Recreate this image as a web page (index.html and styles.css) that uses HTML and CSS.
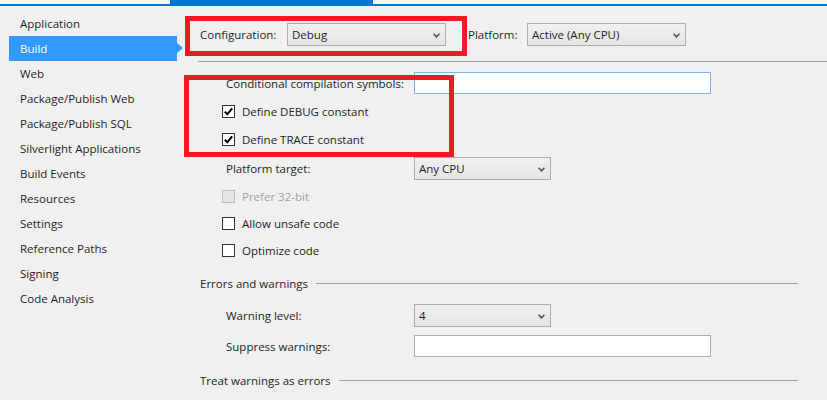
FILE: index.html
```html
<!DOCTYPE html>
<html lang="en">
  <head>
    <meta charset="UTF-8" />
    <meta name="viewport" content="width=device-width, initial-scale=1.0" />
    <title>Project Properties - Build</title>

    <link rel="stylesheet" href="styles.css">
  </head>
  <body>
    <div class="tabstrip">
      <div class="tab-active"></div>
    </div>

    <div class="main">
      <ul class="sidebar">
        <li>Application</li>
        <li class="selected">Build</li>
        <li>Web</li>
        <li>Package/Publish Web</li>
        <li>Package/Publish SQL</li>
        <li>Silverlight Applications</li>
        <li>Build Events</li>
        <li>Resources</li>
        <li>Settings</li>
        <li>Reference Paths</li>
        <li>Signing</li>
        <li>Code Analysis</li>
      </ul>

      <div class="content">
        <div class="config-row">
          <span class="config-label">Configuration:</span>
          <div class="dropdown config-drop">
            <span>Debug</span>
            <svg class="chevron" width="7" height="5" viewBox="0 0 7 5"><path d="M0.6 0.8 L3.5 3.9 L6.4 0.8" fill="none" stroke="#555" stroke-width="1.6" /></svg>
          </div>
          <span class="platform-label">Platform:</span>
          <div class="dropdown config-drop">
            <span>Active (Any CPU)</span>
            <svg class="chevron" width="7" height="5" viewBox="0 0 7 5"><path d="M0.6 0.8 L3.5 3.9 L6.4 0.8" fill="none" stroke="#555" stroke-width="1.6" /></svg>
          </div>
        </div>

        <div class="separator"></div>

        <div class="general">
          <div class="field symbols">
            <span class="field-label">Conditional compilation symbols:</span>
            <div class="textbox focused"></div>
          </div>
          <div class="check-row tall first">
            <span class="checkbox"><svg width="11" height="11" viewBox="0 0 11 11"><path d="M1.8 5.6 L4.3 8.2 L9.2 2.4" fill="none" stroke="#000" stroke-width="2" /></svg></span>
            Define DEBUG constant
          </div>
          <div class="check-row tall">
            <span class="checkbox"><svg width="11" height="11" viewBox="0 0 11 11"><path d="M1.8 5.6 L4.3 8.2 L9.2 2.4" fill="none" stroke="#000" stroke-width="2" /></svg></span>
            Define TRACE constant
          </div>
          <div class="field target">
            <span class="field-label">Platform target:</span>
            <div class="dropdown small-drop">
              <span>Any CPU</span>
              <svg class="chevron" width="7" height="5" viewBox="0 0 7 5"><path d="M0.6 0.8 L3.5 3.9 L6.4 0.8" fill="none" stroke="#555" stroke-width="1.6" /></svg>
            </div>
          </div>
          <div class="check-row disabled">
            <span class="checkbox"></span>
            Prefer 32-bit
          </div>
          <div class="check-row">
            <span class="checkbox"></span>
            Allow unsafe code
          </div>
          <div class="check-row">
            <span class="checkbox"></span>
            Optimize code
          </div>
        </div>

        <div class="group-title errors">Errors and warnings</div>
        <div class="general">
          <div class="field level">
            <span class="field-label">Warning level:</span>
            <div class="dropdown small-drop">
              <span>4</span>
              <svg class="chevron" width="7" height="5" viewBox="0 0 7 5"><path d="M0.6 0.8 L3.5 3.9 L6.4 0.8" fill="none" stroke="#555" stroke-width="1.6" /></svg>
            </div>
          </div>
          <div class="field suppress">
            <span class="field-label">Suppress warnings:</span>
            <div class="textbox"></div>
          </div>
        </div>

        <div class="group-title treat">Treat warnings as errors</div>
      </div>
    </div>

    <!-- annotation boxes drawn over the screenshot -->
    <div class="highlight box-config"></div>
    <div class="highlight box-defines"></div>
  </body>
</html>
```

FILE: styles.css
```css
body {
  margin: 0;
  height: 400px;
  overflow: hidden;
  background-color: #f0f0f0;
  color: #1e1e1e;
  font-family: "Open Sans", "Noto Sans", sans-serif;
  font-size: 11.5px;
}

.tabstrip {
  height: 4px;
  border-bottom: 2px solid #007acc;
  background-color: #f5f5f5;
}

.tab-active {
  margin-left: 170px;
  width: 203px;
  height: 4px;
  background-color: #007acc;
}

.main {
  display: flex;
}

/* left navigation */
.sidebar {
  list-style: none;
  margin: 0;
  padding: 5px 0 0 9px;
  width: 174px;
  flex-shrink: 0;
}

.sidebar li {
  position: relative;
  width: 168px;
  height: 25px;
  line-height: 25px;
  padding-left: 11px;
  box-sizing: border-box;
  white-space: nowrap;
}

.sidebar li.selected {
  background-color: #3399ff;
  color: #ffffff;
}

.sidebar li.selected::after {
  content: "";
  position: absolute;
  right: -6px;
  top: 7px;
  border-top: 5px solid transparent;
  border-bottom: 5px solid transparent;
  border-left: 6px solid #3399ff;
}

/* page */
.content {
  flex: 1;
  padding: 17px 0 0 17px;
}

.config-row {
  display: flex;
  align-items: center;
  height: 23px;
}

.config-label {
  width: 87px;
}

.platform-label {
  margin-left: 22px;
  width: 59px;
}

.dropdown {
  display: flex;
  align-items: center;
  justify-content: space-between;
  height: 23px;
  box-sizing: border-box;
  padding: 0 5px 0 4px;
  border: 1px solid #acacac;
  background: linear-gradient(#f0f0f0, #e5e5e5);
}

.config-drop {
  width: 159px;
}

.small-drop {
  width: 137px;
}

.chevron {
  margin-top: 1px;
}

.separator {
  margin: 15px 0 0 -2px;
  height: 1px;
  background-color: #a0a0a0;
}

.general {
  padding-left: 26px;
}

.field {
  display: flex;
  align-items: center;
}

.field-label {
  width: 188px;
  flex-shrink: 0;
}

.textbox {
  width: 297px;
  height: 22px;
  box-sizing: border-box;
  border: 1px solid #abadb3;
  background-color: #ffffff;
}

.textbox.focused {
  border-color: #7eb4ea;
}

.symbols {
  margin-top: 10px;
}

.target {
  margin-top: 4px;
}

.check-row {
  display: flex;
  align-items: center;
  height: 27px;
  margin-left: -4px;
}

.check-row.tall {
  height: 28px;
}

.check-row.first,
.check-row.disabled {
  margin-top: 3px;
}

.checkbox {
  display: flex;
  align-items: center;
  justify-content: center;
  width: 13px;
  height: 13px;
  box-sizing: border-box;
  margin-right: 7px;
  border: 1px solid #333333;
  background-color: #ffffff;
}

.check-row.disabled {
  color: #a2a2a2;
}

.check-row.disabled .checkbox {
  border-color: #bcbcbc;
  background-color: #e6e6e6;
}

.group-title {
  display: flex;
  align-items: center;
  height: 22px;
  margin-right: 29px;
}

.group-title::after {
  content: "";
  flex: 1;
  height: 1px;
  margin-left: 8px;
  background-color: #a0a0a0;
}

.errors {
  margin-top: 8px;
}

.level {
  margin-top: 10px;
}

.suppress {
  margin-top: 8px;
}

.treat {
  margin-top: 12px;
}

/* red annotation boxes */
.highlight {
  position: absolute;
  border: 5px solid #ed1c24;
  box-sizing: border-box;
}

.box-config {
  left: 185px;
  top: 16px;
  width: 282px;
  height: 40px;
}

.box-defines {
  left: 184px;
  top: 75px;
  width: 270px;
  height: 82px;
}
```
